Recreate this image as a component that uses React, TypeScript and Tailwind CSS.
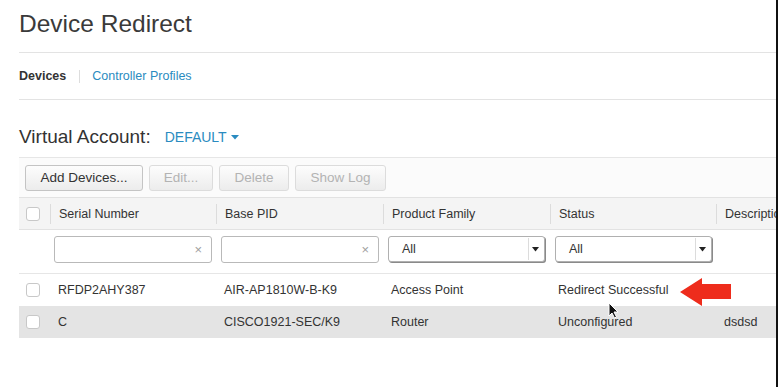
import React from "react";

const font = { fontFamily: '"Liberation Sans", Arial, Helvetica, sans-serif' };

function Checkbox() {
  return <div className="w-[14px] h-[14px] rounded-[3px] border border-[#c8c8c8] bg-white" />;
}

function TextFilter() {
  return (
    <div className="h-[27px] rounded-[3px] border border-[#b9b9b9] bg-white flex items-center justify-end pr-[9px] text-[#a0a0a0] text-[13px]">
      ×
    </div>
  );
}

function SelectFilter() {
  return (
    <div className="h-[26px] rounded-[3px] border border-[#b0b0b0] bg-white flex items-center shadow-[1px_1px_0_#8a8a8a]">
      <span className="pl-[13px] flex-1 text-[12.5px] text-[#333]">All</span>
      <div className="w-[14px] h-[22px] mr-[2px] border-l border-[#dcdcdc] flex items-center justify-center">
        <svg width="7" height="5" viewBox="0 0 7 5"><path d="M0 0h7L3.5 4.5z" fill="#222" /></svg>
      </div>
    </div>
  );
}

function Btn({ children, disabled }: { children: React.ReactNode; disabled?: boolean }) {
  return (
    <div
      className={
        "h-[26px] rounded-[3px] border flex items-center justify-center text-[13.5px] bg-gradient-to-b from-[#fdfdfd] to-[#ececec] " +
        (disabled ? "border-[#dcdcdc] text-[#b3b3b3]" : "border-[#c4c4c4] text-[#333]")
      }
    >
      {children}
    </div>
  );
}

export default function App() {
  const cols = "grid grid-cols-[31px_166px_167px_167px_166px_120px]";
  return (
    <div className="w-[778px] h-[387px] bg-white flex overflow-hidden" style={font}>
      <div className="w-[776px] h-full pl-[19px] overflow-hidden relative">
        <div className="h-[53px] border-b border-[#e3e3e3] pt-[8px]">
          <h1 className="text-[24.5px] leading-[32px] text-[#3a3a3a] font-normal">Device Redirect</h1>
        </div>
        <div className="h-[47px] border-b border-[#e3e3e3] flex items-center text-[12.5px]">
          <span className="font-bold text-[#333]">Devices</span>
          <span className="w-px h-[13px] bg-[#dddddd] ml-[13px] mr-[12px]" />
          <span className="text-[#2a8bc0]">Controller Profiles</span>
        </div>
        <div className="h-[57px] pt-[27px] flex items-start">
          <span className="text-[19px] leading-[20px] text-[#333]">Virtual Account:</span>
          <span className="ml-[14px] text-[14px] leading-[20px] text-[#2a8bc0] flex items-center">
            DEFAULT
            <svg className="ml-[4px]" width="8" height="5" viewBox="0 0 8 5"><path d="M0 0h8L4 4.5z" fill="#2a8bc0" /></svg>
          </span>
        </div>
        <div className="h-[40px] border-t border-[#e6e6e6] bg-[#fbfbfb] flex items-start pt-[7px] pl-[6px] gap-[6px]">
          <div className="w-[118px]"><Btn>Add Devices...</Btn></div>
          <div className="w-[64px]"><Btn disabled>Edit...</Btn></div>
          <div className="w-[70px]"><Btn disabled>Delete</Btn></div>
          <div className="w-[91px]"><Btn disabled>Show Log</Btn></div>
        </div>
        <div className={cols + " h-[33px] border-t border-b border-[#e2e2e2] bg-[#f4f4f4] items-center text-[12.5px] text-[#333] whitespace-nowrap"}>
          <div className="pl-[7px]"><Checkbox /></div>
          <div className="border-l border-[#dcdcdc] pl-[8px] h-[20px] leading-[20px]">Serial Number</div>
          <div className="border-l border-[#dcdcdc] pl-[8px] h-[20px] leading-[20px]">Base PID</div>
          <div className="border-l border-[#dcdcdc] pl-[8px] h-[20px] leading-[20px]">Product Family</div>
          <div className="border-l border-[#dcdcdc] pl-[8px] h-[20px] leading-[20px]">Status</div>
          <div className="border-l border-[#dcdcdc] pl-[8px] h-[20px] leading-[20px]">Description</div>
        </div>
        <div className={cols + " h-[44px] border-b border-[#e6e6e6] items-start pt-[6px]"}>
          <div />
          <div className="pl-[4px] pr-[4px]"><TextFilter /></div>
          <div className="pl-[5px] pr-[4px]"><TextFilter /></div>
          <div className="pl-[5px] pr-[5px]"><SelectFilter /></div>
          <div className="pl-[5px] pr-[4px]"><SelectFilter /></div>
          <div />
        </div>
        <div className={cols + " h-[32px] items-center text-[12.5px] text-[#333] whitespace-nowrap"}>
          <div className="pl-[7px]"><Checkbox /></div>
          <div className="pl-[8px]">RFDP2AHY387</div>
          <div className="pl-[8px]">AIR-AP1810W-B-K9</div>
          <div className="pl-[8px]">Access Point</div>
          <div className="pl-[8px]">Redirect Successful</div>
          <div />
        </div>
        <div className={cols + " h-[32px] items-center text-[12.5px] text-[#333] bg-[#e4e4e4] whitespace-nowrap"}>
          <div className="pl-[7px]"><Checkbox /></div>
          <div className="pl-[8px]">C</div>
          <div className="pl-[8px]">CISCO1921-SEC/K9</div>
          <div className="pl-[8px]">Router</div>
          <div className="pl-[8px]">Unconfigured</div>
          <div className="pl-[8px]">dsdsd</div>
        </div>
        <svg className="absolute left-[680px] top-[278px]" width="51" height="28" viewBox="0 0 51 28">
          <path d="M0 14 L22 0 L22 6 L51 6 L51 21 L22 21 L22 28 Z" fill="#ee2c1c" />
        </svg>
        <svg className="absolute left-[608px] top-[302px]" width="12" height="17" viewBox="0 0 12 17">
          <path d="M1 1 L1 14 L4 11 L6.5 16 L8.5 15 L6 10 L10 10 Z" fill="#111" stroke="#fff" strokeWidth="1" />
        </svg>
      </div>
      <div className="w-[2px] h-full bg-[#111]" />
    </div>
  );
}
